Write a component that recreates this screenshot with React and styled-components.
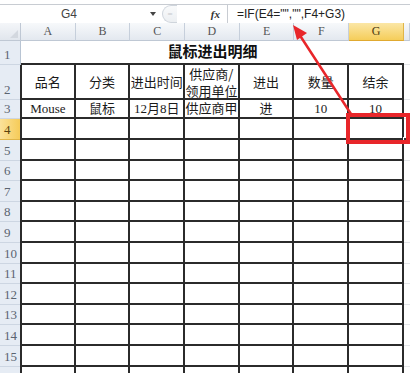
import React from "react";
import styled, { createGlobalStyle } from "styled-components";

const Global = createGlobalStyle`
  html, body { margin: 0; padding: 0; background: #ffffff; }
  body { font-family: "Liberation Serif", "Noto Sans CJK SC", serif; overflow: hidden; }
`;

const Page = styled.div`
  position: relative;
  width: 410px;
  height: 373px;
  overflow: hidden;
  background: #fff;
  padding-top: 4px;
  box-sizing: border-box;
`;

const FormulaBar = styled.div`
  display: grid;
  grid-template-columns: 142px 86px 1fr;
  height: 18px;
  border-top: 1px solid #c8ccd2;
  background: #fff;
  font-size: 12px;
  color: #333;
`;

const NameBox = styled.div`
  display: flex;
  align-items: center;
  justify-content: center;
  padding-right: 4px;
  font-family: "Liberation Sans", sans-serif;
  font-size: 12px;
  color: #444;
`;

const Controls = styled.div`
  display: flex;
  align-items: center;
  gap: 6px;
  border-right: 1px solid #c8ccd2;
`;

const DropArrow = styled.span`
  width: 0;
  height: 0;
  margin-left: 8px;
  border-left: 3px solid transparent;
  border-right: 3px solid transparent;
  border-top: 4px solid #444;
`;

const Pill = styled.span`
  width: 14px;
  height: 16px;
  border: 1px solid #cfd5dc;
  border-right: none;
  border-radius: 9px 0 0 9px;
  display: flex;
  align-items: center;
  justify-content: center;
  color: #c7c9cc;
  font-size: 9px;
  background: linear-gradient(#f9fafb, #eceff2);
`;

const Fx = styled.span`
  margin-left: auto;
  margin-right: 7px;
  font-family: "Liberation Serif", serif;
  font-style: italic;
  font-weight: bold;
  font-size: 11px;
  color: #333;
`;

const Formula = styled.div`
  display: flex;
  align-items: center;
  padding-left: 9px;
  font-family: "Liberation Sans", sans-serif;
  font-size: 12px;
  color: #222;
  white-space: nowrap;
`;

const Sheet = styled.div`
  display: grid;
  grid-template-columns: 21px repeat(7, 54.7px) 1fr;
  grid-template-rows: 18px 24px 35px 19px 21px repeat(11, 20.6px) 20px;
`;

const Corner = styled.div`
  background: linear-gradient(#f4f6f9, #e1e6ed);
  border-right: 1px solid #bfc8d4;
  border-bottom: 1px solid #bfc8d4;
  position: relative;
  &::after {
    content: "";
    position: absolute;
    right: 2px;
    bottom: 2px;
    border-left: 8px solid transparent;
    border-bottom: 8px solid #d3d8df;
  }
`;

const ColHead = styled.div`
  display: flex;
  align-items: center;
  justify-content: center;
  font-size: 12px;
  color: ${(p) => (p.$active ? "#4a3a10" : "#555")};
  background: ${(p) =>
    p.$active
      ? "linear-gradient(#fbe7a6, #f5cd5a)"
      : "linear-gradient(#f7f9fb, #e3e8ef)"};
  border-right: 1px solid ${(p) => (p.$active ? "#e0b548" : "#c6cfdb")};
  border-bottom: 1px solid ${(p) => (p.$active ? "#e0a930" : "#bfc8d4")};
`;

const RowHead = styled.div`
  display: flex;
  align-items: flex-end;
  padding: 0 0 1px 4px;
  font-size: 13px;
  color: ${(p) => (p.$active ? "#5a4310" : "#5b6470")};
  background: ${(p) =>
    p.$active ? "linear-gradient(90deg, #fbe29a, #f6cb58)" : "#e6ecf4"};
  border-right: 1px solid ${(p) => (p.$active ? "#e0a930" : "#b8c4d3")};
  border-bottom: 1px solid ${(p) => (p.$active ? "#e0b548" : "#cdd6e2")};
`;

const Title = styled.div`
  grid-column: 2 / span 7;
  display: flex;
  align-items: flex-end;
  justify-content: center;
  padding-bottom: 2px;
  font-family: "Noto Sans CJK SC", sans-serif;
  font-weight: bold;
  font-size: 15px;
  color: #111;
  border-bottom: 2px solid #2b2b2b;
`;

const Blank = styled.div`
  border-bottom: 1px solid #e4e6e9;
`;

const Cell = styled.div`
  display: flex;
  align-items: center;
  justify-content: center;
  text-align: center;
  font-size: 13px;
  line-height: 17px;
  color: #1a1a1a;
  border-right: 2px solid #2b2b2b;
  border-bottom: 2px solid #2b2b2b;
  border-left: ${(p) => (p.$first ? "2px solid #2b2b2b" : "none")};
  margin-left: ${(p) => (p.$first ? "-1px" : "0")};
`;

const Edge = styled.div`
  border-bottom: 1px solid #e4e6e9;
`;

const Overlay = styled.svg`
  position: absolute;
  left: 0;
  top: 0;
  pointer-events: none;
`;

const FillHandle = styled.div`
  position: absolute;
  left: 403px;
  top: 137px;
  width: 4px;
  height: 4px;
  background: #333;
  border: 1px solid #fff;
`;

const HeaderText = styled.span`
  white-space: pre-line;
  font-family: "Noto Sans CJK SC", sans-serif;
  font-size: 13px;
  line-height: 17px;
`;

const cols = ["A", "B", "C", "D", "E", "F", "G"];
const headers = ["品名", "分类", "进出时间", "供应商/\n领用单位", "进出", "数量", "结余"];
const row3 = ["Mouse", "鼠标", "12月8日", "供应商甲", "进", "10", "10"];

function DataRow({ n, label, values, active }) {
  return (
    <>
      <RowHead $active={active}>{label === undefined ? n : label}</RowHead>
      {cols.map((c, i) => (
        <Cell key={c} $first={i === 0}>
          {values ? values[i] : null}
        </Cell>
      ))}
      <Edge />
    </>
  );
}

export default function App() {
  const emptyRows = [];
  for (let r = 5; r <= 15; r++) emptyRows.push(r);
  return (
    <Page>
      <Global />
      <FormulaBar>
        <NameBox>G4</NameBox>
        <Controls>
          <DropArrow />
          <Pill>=</Pill>
          <Fx>fx</Fx>
        </Controls>
        <Formula>=IF(E4="","",F4+G3)</Formula>
      </FormulaBar>
      <Sheet>
        <Corner />
        {cols.map((c) => (
          <ColHead key={c} $active={c === "G"}>
            {c}
          </ColHead>
        ))}
        <ColHead />

        <RowHead>1</RowHead>
        <Title>鼠标进出明细</Title>
        <Blank />

        <RowHead>2</RowHead>
        {headers.map((h, i) => (
          <Cell key={i} $first={i === 0}>
            <HeaderText>{h}</HeaderText>
          </Cell>
        ))}
        <Edge />

        <DataRow n={3} values={row3} />
        <DataRow n={4} active />
        {emptyRows.map((r) => (
          <DataRow key={r} n={r} />
        ))}
        <DataRow n={16} label="" />
      </Sheet>

      <FillHandle />
      <Overlay width="410" height="373" viewBox="0 0 410 373">
        <rect x="348" y="115" width="60" height="27" fill="none" stroke="#e8262a" strokeWidth="4" />
        <line x1="351" y1="114" x2="299" y2="34" stroke="#e8262a" strokeWidth="2.5" strokeLinecap="round" />
        <polygon points="293,25 307,33 297,40" fill="#e8262a" />
      </Overlay>
    </Page>
  );
}
